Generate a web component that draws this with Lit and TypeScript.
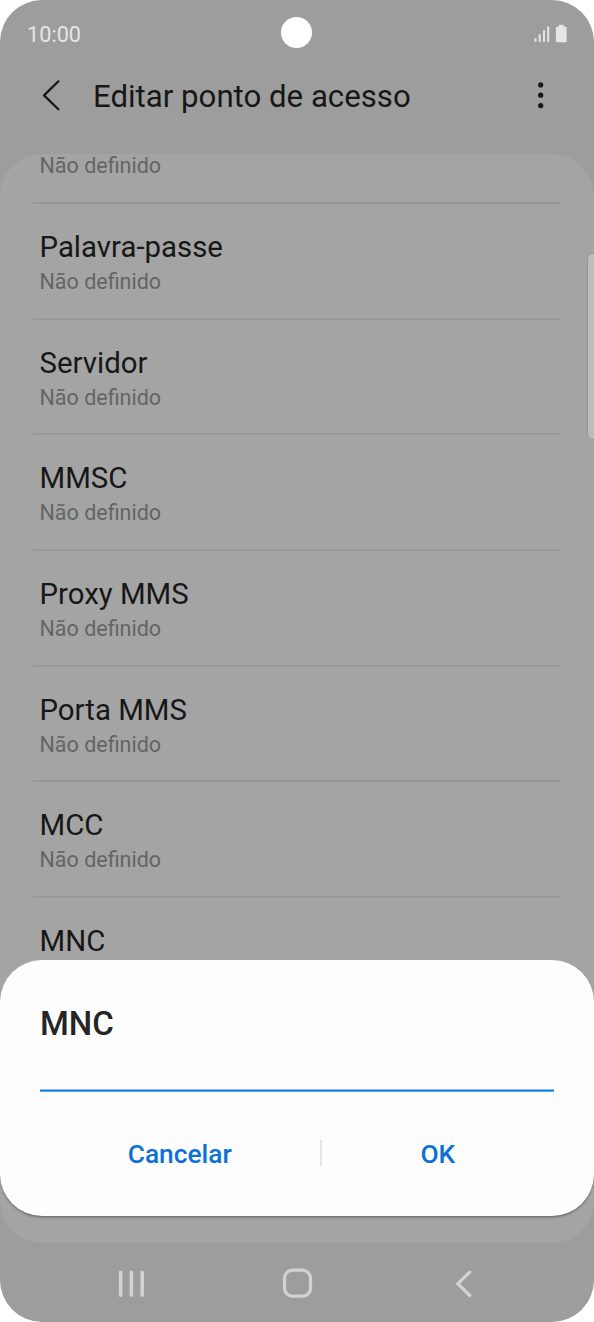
import { LitElement, html, css, nothing } from "lit";
import { customElement, property, state } from "lit/decorators.js";

@customElement("status-bar")
class StatusBar extends LitElement {
  static styles = css`
    :host { display: grid; grid-template-columns: 1fr auto 1fr; align-items: center; height: 67px; padding: 0 26px 0 27px; color: #e6e6e6; }
    .time { font-size: 21.7px; line-height: 28px; padding-top: 2px; }
    .camera { width: 31px; height: 31px; border-radius: 50%; background: #fff; margin: -2px 1px 0 -1px; }
    .icons { display: flex; justify-content: flex-end; margin-right: -1px; }
  `;
  render() {
    return html`
      <span class="time">10:00</span>
      <span class="camera"></span>
      <span class="icons">
        <svg width="35" height="20" viewBox="0 0 35 20" fill="#e6e6e6">
          <rect x="0.5" y="14" width="2" height="4" rx="1" />
          <rect x="4.7" y="9.9" width="2" height="8.1" rx="1" />
          <rect x="9" y="5.9" width="2" height="12.1" rx="1" />
          <rect x="13.2" y="2.3" width="2" height="15.7" rx="1" />
          <path transform="translate(-.6 0)" d="M26.2 .8h3.4q.9 0 .9 .9v1h1.6q1.1 0 1.1 1.1v13.2q0 1.2-1.1 1.2h-8.5q-1.1 0-1.1-1.2v-13.2q0-1.1 1.1-1.1h1.7v-1q0-.9 .9-.9z" />
        </svg>
      </span>
    `;
  }
}

@customElement("setting-row")
class SettingRow extends LitElement {
  @property() label = "";
  @property() value = "";
  static styles = css`
    :host { display: flex; flex-direction: column; justify-content: flex-end; box-sizing: border-box; height: 115.67px; padding: 0 6.5px 22.67px; border-bottom: 2px solid #979797; }
    .label { font-size: 29.4px; line-height: 34px; margin-bottom: 5px; color: #171717; }
    .value { font-size: 21.5px; line-height: 26px; color: #646464; }
  `;
  render() {
    return html`${this.label ? html`<div class="label">${this.label}</div>` : nothing}<div class="value">${this.value}</div>`;
  }
}

@customElement("edit-sheet")
class EditSheet extends LitElement {
  @property() heading = "";
  static styles = css`
    :host { display: flex; flex-direction: column; box-sizing: border-box; height: 256px; padding: 44px 40px 0; border-radius: 42px; background: #fdfdfd; box-shadow: 0 2px 3px -1px rgba(0, 0, 0, 0.45); }
    .heading { font-size: 33px; line-height: 40px; font-weight: 500; color: #252525; }
    .field { height: 46px; border-bottom: 1px solid #1f7fdd; box-shadow: 0 1px 0 #55a4ea, inset 0 -1px 0 #84bdf0; }
    .actions { display: flex; align-items: center; height: 40px; margin-top: 43px; }
    .action { flex: 1; border: 0; padding: 0; background: none; font: 500 26.3px/32px Roboto, sans-serif; color: #0b72d4; text-align: center; }
    .cancel { flex: 0 0 279.5px; }
    .split { width: 2px; height: 26px; margin-top: -2px; background: #e5e5e5; }
  `;
  render() {
    return html`
      <div class="heading">${this.heading}</div>
      <div class="field"></div>
      <div class="actions">
        <button class="action cancel">Cancelar</button>
        <span class="split"></span>
        <button class="action">OK</button>
      </div>
    `;
  }
}

@customElement("nav-bar")
class NavBar extends LitElement {
  static styles = css`
    :host { display: flex; justify-content: space-between; align-items: center; height: 79px; padding: 0 115px 0 111px; }
    svg { display: block; fill: none; stroke: #d2d2d2; }
  `;
  render() {
    return html`
      <svg width="40" height="36" viewBox="0 0 40 36" stroke-width="3.6" stroke-linecap="round">
        <path d="M9.6 7.3v23M20.4 7.3v23M31.2 7.3v23" />
      </svg>
      <svg width="36" height="36" viewBox="0 0 36 36" stroke-width="3.2">
        <rect x="3.5" y="5.2" width="26" height="26" rx="8" />
      </svg>
      <svg width="32" height="36" viewBox="0 0 32 36" stroke-width="3.2" stroke-linecap="round">
        <path d="M22.8 7.2L10.8 18.7L22.8 30.5" />
      </svg>
    `;
  }
}

@customElement("app-root")
class AppRoot extends LitElement {
  @state() private rows = ["", "Palavra-passe", "Servidor", "MMSC", "Proxy MMS", "Porta MMS", "MCC"];
  static styles = css`
    :host { display: block; position: relative; width: 594px; height: 1322px; overflow: hidden; border-radius: 42px; background: #9d9d9d; font-family: Roboto, sans-serif; }
    .header { display: flex; align-items: center; height: 87px; }
    .back { margin-left: 36px; margin-top: -32px; }
    .title { flex: 1; margin: -27px 0 0 21px; font-size: 31.2px; line-height: 40px; font-weight: 400; color: #171717; }
    .more { margin: -32px 38px 0 0; }
    .panel { height: 1089px; overflow: hidden; border-radius: 42px; background: #a4a4a4; }
    .rows { margin: -65.67px 33.5px 0 33px; }
    .last { font-size: 29.4px; line-height: 34px; padding: 26px 6.5px 0; color: #171717; }
    .thumb { position: absolute; top: 253px; right: -9px; width: 14px; height: 185px; border: 1px solid #999; border-radius: 6px; background: #bdbdbd; }
    .sheet { position: absolute; left: 0; right: 0; top: 960px; }
  `;
  render() {
    return html`
      <status-bar></status-bar>
      <div class="header">
        <svg class="back" width="36" height="36" viewBox="0 0 36 36" fill="none" stroke="#171717" stroke-width="2.2" stroke-linecap="round" stroke-linejoin="round">
          <path d="M22.4 4.3L8 18.4L22.4 32.2" />
        </svg>
        <h1 class="title">Editar ponto de acesso</h1>
        <svg class="more" width="30" height="36" viewBox="0 0 30 36" fill="#171717">
          <circle cx="14.7" cy="7.9" r="2.6" /><circle cx="14.7" cy="18.2" r="2.6" /><circle cx="14.7" cy="28.6" r="2.6" />
        </svg>
      </div>
      <div class="panel">
        <div class="rows">
          ${this.rows.map((label) => html`<setting-row .label=${label} .value=${"Não definido"}></setting-row>`)}
          <div class="last">MNC</div>
        </div>
      </div>
      <nav-bar></nav-bar>
      <div class="thumb"></div>
      <edit-sheet class="sheet" .heading=${"MNC"}></edit-sheet>
    `;
  }
}
